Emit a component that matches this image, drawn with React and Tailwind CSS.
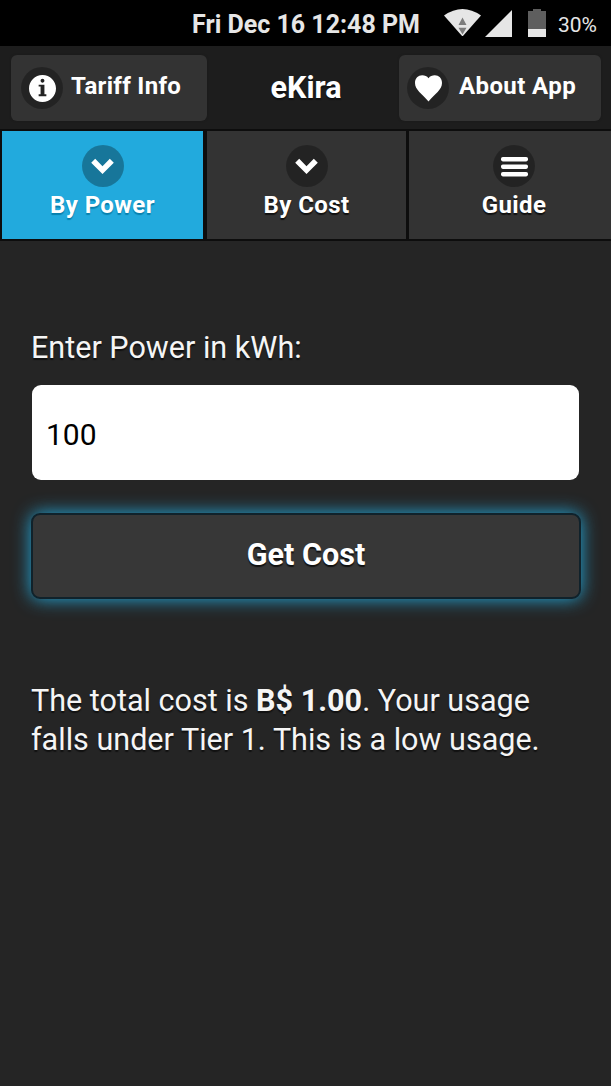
import React, { useState } from "react";

// --- ICONS ---
const InfoIcon = () => (
    <svg viewBox="0 0 14 14" className="w-[27px] h-[27px]" fill="#fff">
        <path
            fillRule="evenodd"
            d="M7,0C3.134,0,0,3.134,0,7s3.134,7,7,7s7-3.134,7-7S10.866,0,7,0z M7,2c0.552,0,1,0.447,1,1S7.552,4,7,4S6,3.553,6,3S6.448,2,7,2z M9,11H5v-1h1V6H5V5h3v5h1V11z"
        />
    </svg>
);

const HeartIcon = () => (
    <svg viewBox="0 0 27 27" className="w-[27px] h-[27px]" fill="#fff">
        <path d="M13.500 3.200C12 1.200 9.800 0.300 7.200 0.300C3.200 0.300 0 3.200 0 8C0 15 7 18.500 13.500 26.500C20 18.500 27 15 27 8C27 3.200 23.800 0.300 19.800 0.300C17.200 0.300 15 1.200 13.500 3.200Z" />
    </svg>
);

const CaratIcon = () => (
    <svg viewBox="0 0 27 27" className="w-[27px] h-[27px]" fill="#fff">
        <path d="M6.200 5.800L13.500 13.200L20.800 5.800L24.800 9.800L13.500 21L2.200 9.800Z" />
    </svg>
);

const BarsIcon = () => (
    <svg viewBox="0 0 27 27" className="w-[27px] h-[27px]" fill="#fff">
        <rect y="4" width="27" height="4.400" rx="1.800" />
        <rect y="11.500" width="27" height="4.400" rx="1.800" />
        <rect y="19" width="27" height="4.400" rx="1.800" />
    </svg>
);

const IconDisc = ({ children }) => (
    <span className="flex h-[42px] w-[42px] shrink-0 items-center justify-center rounded-full bg-black/30">
        {children}
    </span>
);

// --- STATUS BAR ---
const StatusBar = () => (
    <div className="flex h-[46px] items-start justify-end bg-black pr-[14px] text-[#e6e6e6]">
        <span className="mt-[10px] mr-[24px] text-[25px] leading-[30px] font-bold">
            Fri Dec 16 12:48 PM
        </span>
        <svg viewBox="0 0 37 27" className="mt-[9px] mr-[4px] h-[27px] w-[37px]">
            <path d="M0 6.500Q18.500 -6.500 37 6.500L18.500 27.500Z" fill="#e6e6e6" />
            <path d="M18.500 8.500L22.500 16H14.500Z M14.500 18.800H22.500L18.500 25.500Z" fill="#7d7d7d" />
        </svg>
        <svg viewBox="0 0 27 27" className="mt-[10px] mr-[16px] h-[27px] w-[27px]">
            <path d="M27 0V27H0Z" fill="#e6e6e6" />
        </svg>
        <svg viewBox="0 0 18 28" className="mt-[9px] mr-[12px] h-[28px] w-[18px]">
            <path d="M5 0H13V2H18V20H0V2H5Z" fill="#5e5e5e" />
            <path d="M0 20H18V28H0Z" fill="#e6e6e6" />
        </svg>
        <span className="mt-[11px] text-[21px] leading-[28px]">30%</span>
    </div>
);

const tabs = [
    { id: "power", label: "By Power", icon: <CaratIcon />, width: "w-[201px]" },
    { id: "cost", label: "By Cost", icon: <CaratIcon />, width: "w-[199px]" },
    { id: "guide", label: "Guide", icon: <BarsIcon />, width: "w-[210px]" },
];

const HeaderButton = ({ icon, label, className }) => (
    <button
        className={`flex h-[66px] items-center rounded-[6px] bg-[#333] text-left text-[24px] font-bold shadow-[0_0_2px_#1a1a1a] ${className}`}
    >
        <IconDisc>{icon}</IconDisc>
        <span className="mb-[5px] ml-[8px] whitespace-nowrap">{label}</span>
    </button>
);

export default function App() {
    const [activeTab, setActiveTab] = useState("power");
    const [power, setPower] = useState("100");

    return (
        <div className="h-[1086px] w-[611px] overflow-hidden bg-[#252525] font-['Roboto',sans-serif] text-white">
            <StatusBar />

            {/* Header */}
            <div className="flex h-[83px] items-start bg-[#1d1d1d] pt-[9px] pl-[11px] tracking-[0.3px] [text-shadow:0_2px_1px_#111]">
                <HeaderButton
                    icon={<InfoIcon />}
                    label="Tariff Info"
                    className="w-[196px] pl-[10px]"
                />
                <h1 className="mt-[14px] w-[192px] pl-[6px] text-center text-[30.500px] leading-[38px] font-bold tracking-normal">
                    eKira
                </h1>
                <HeaderButton
                    icon={<HeartIcon />}
                    label="About App"
                    className="w-[202px] pl-[8px] tracking-[0.4px] [&>span:last-child]:ml-[10px]"
                />
            </div>

            {/* Navbar, the last tab runs past the right edge */}
            <div className="flex h-[112px] gap-[4px] overflow-hidden border-y-2 border-[#0d0d0d] bg-[#0d0d0d] pl-[2px]">
                {tabs.map((tab) => (
                    <button
                        key={tab.id}
                        onClick={() => setActiveTab(tab.id)}
                        className={`flex shrink-0 flex-col items-center pt-[14px] text-[24px] leading-[30px] font-bold tracking-[0.4px] last:-ml-px ${tab.width} ${
                            activeTab === tab.id
                                ? "bg-[#22aadd] [text-shadow:0_2px_1px_#0880ad]"
                                : "bg-[#333] [text-shadow:0_2px_1px_#111]"
                        }`}
                    >
                        <IconDisc>{tab.icon}</IconDisc>
                        <span className="mt-[3px]">{tab.label}</span>
                    </button>
                ))}
            </div>

            {/* Content */}
            <div className="px-[31px] pt-[87px] text-[30.550px] leading-[39px]">
                <label htmlFor="power" className="block text-[#f5f5f5] [text-shadow:0_2px_1px_#111]">
                    Enter Power in kWh:
                </label>
                <input
                    id="power"
                    value={power}
                    onChange={(e) => setPower(e.target.value)}
                    className="mt-[18px] ml-[1px] block h-[95px] w-[547px] rounded-[9px] bg-white px-[14px] pt-[4px] text-[30px] text-black outline-none"
                />
                <button className="mt-[33px] block h-[86px] w-[550px] rounded-[9px] border-2 border-[#10222b] bg-[#373737] pb-[4px] font-bold shadow-[0_0_18px_#22aadd] [text-shadow:0_2px_1px_#111]">
                    Get Cost
                </button>
                <p className="mt-[83px] whitespace-nowrap leading-[38.500px] text-[#f5f5f5] [text-shadow:0_2px_1px_#111]">
                    The total cost is <b>B$ 1.00</b>. Your usage
                    <br />
                    falls under Tier 1. This is a low usage.
                </p>
            </div>
        </div>
    );
}
